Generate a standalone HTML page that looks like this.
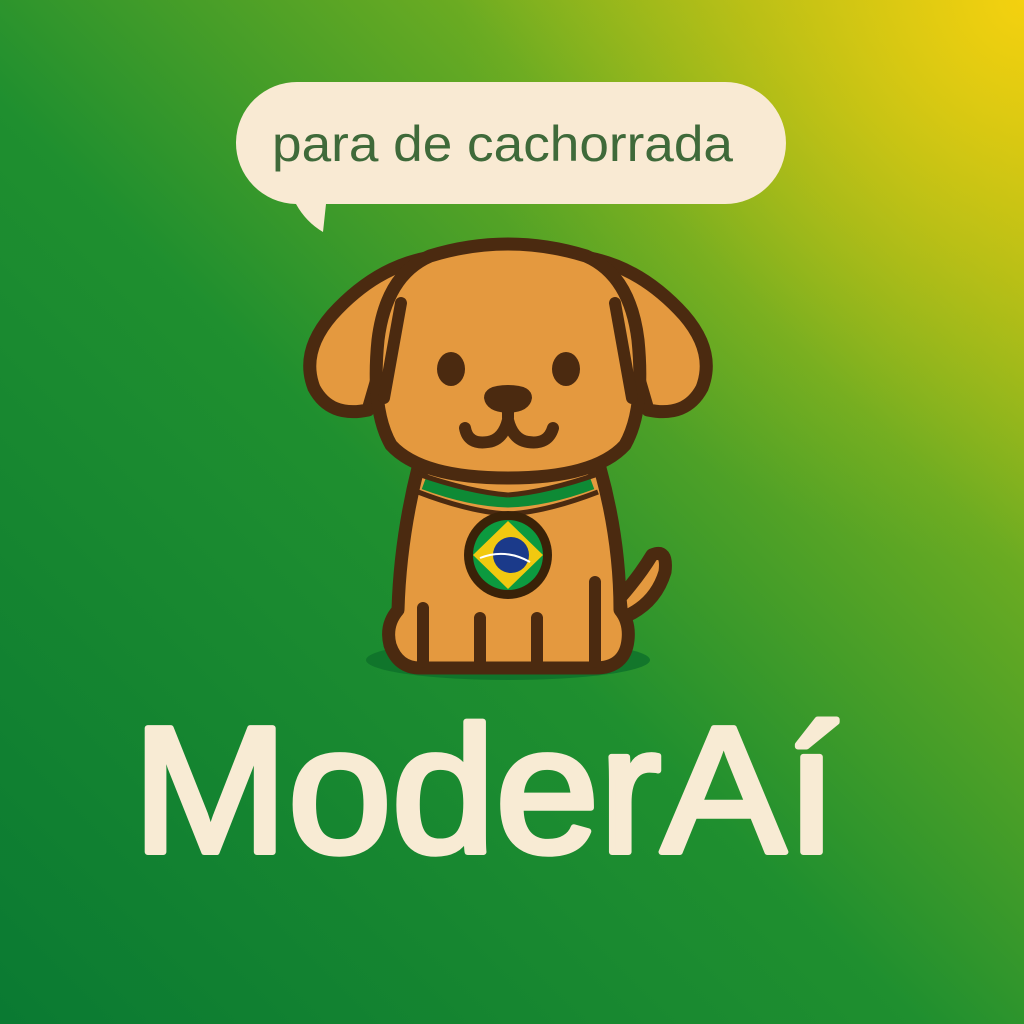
<!DOCTYPE html>
<html><head><meta charset="utf-8"><style>
html,body{margin:0;padding:0;width:1024px;height:1024px;overflow:hidden}
</style></head><body>
<svg width="1024" height="1024" viewBox="0 0 1024 1024" xmlns="http://www.w3.org/2000/svg">
<defs>
<linearGradient id="bg" x1="0" y1="1" x2="1" y2="0">
<stop offset="0" stop-color="#0a7a32"/>
<stop offset="0.45" stop-color="#1f8f2f"/>
<stop offset="0.72" stop-color="#6aab22"/>
<stop offset="1" stop-color="#f5d20e"/>
</linearGradient>
<radialGradient id="yl" cx="1" cy="0" r="0.55">
<stop offset="0" stop-color="#f4d10f" stop-opacity="1"/>
<stop offset="0.5" stop-color="#c2c015" stop-opacity="0.5"/>
<stop offset="1" stop-color="#8ab520" stop-opacity="0"/>
</radialGradient>
<clipPath id="fc"><circle cx="508" cy="555" r="35"/></clipPath>
</defs>
<rect width="1024" height="1024" fill="url(#bg)"/>
<rect width="1024" height="1024" fill="url(#yl)"/>
<path d="M298,82 H725 A61,61 0 0 1 725,204 H326 L323,232 Q306,222 296,204 A61,61 0 0 1 298,82 Z" fill="#f9ead3"/>
<text x="272" y="161" textLength="461" lengthAdjust="spacingAndGlyphs" font-family="Liberation Sans, sans-serif" font-size="50" fill="#3f6a3a">para de cachorrada</text>
<ellipse cx="508" cy="660" rx="142" ry="20" fill="#0e6f2a" opacity="0.8"/>
<g stroke="#4b2a10" stroke-width="13" stroke-linecap="round" stroke-linejoin="round" fill="#e4993f">
<path d="M620,598 Q640,575 652,555 Q668,548 665,572 Q655,605 622,618 Z"/>
<path d="M418,468 Q400,540 398,610 Q385,625 390,645 Q398,668 420,668 L595,668 Q625,668 628,640 Q630,622 620,610 Q620,540 600,468 Z"/>
<path d="M440,256 Q380,262 332,315 Q300,352 314,388 Q330,418 368,410 L400,300 Z"/>
<path d="M576,256 Q636,262 684,315 Q716,352 702,388 Q686,418 648,410 L616,300 Z"/>
<path d="M430,256 Q508,232 586,256 Q630,275 638,340 Q645,410 625,445 Q595,478 508,478 Q421,478 391,445 Q371,410 378,340 Q386,275 430,256 Z"/>
</g>
<g stroke="#4b2a10" stroke-width="12" stroke-linecap="round" fill="none">
<path d="M401,303 L384,398"/>
<path d="M615,303 L632,398"/>
<path d="M423,608 L423,662"/>
<path d="M480,618 L480,668"/>
<path d="M537,618 L537,668"/>
<path d="M595,582 L595,662"/>
<path d="M508,403 L508,418 M465,428 Q468,445 488,442 Q503,440 508,420 Q513,440 528,442 Q548,445 553,428"/>
</g>
<path d="M424,483 Q470,500 508,501 Q546,500 592,483" stroke="#0e8a35" stroke-width="13" fill="none"/>
<path d="M418,474 Q470,492 508,495 M598,474 Q546,492 508,495 M418,492 Q470,512 508,514 M598,492 Q546,512 508,514" stroke="#4b2a10" stroke-width="5" fill="none"/>
<ellipse cx="451" cy="369" rx="14" ry="17" fill="#4b2a10"/>
<ellipse cx="566" cy="369" rx="14" ry="17" fill="#4b2a10"/>
<path d="M484,398 Q484,385 508,385 Q532,385 532,398 Q530,412 508,413 Q486,412 484,398 Z" fill="#4b2a10"/>
<circle cx="508" cy="555" r="44" fill="#3a2208"/>
<g clip-path="url(#fc)">
<rect x="470" y="517" width="80" height="80" fill="#0c9a3f"/>
<polygon points="508,521 543,555 508,589 473,555" fill="#f1c910"/>
<circle cx="511" cy="555" r="18" fill="#1b3a8a"/>
<path d="M480,558 Q505,548 530,562" stroke="#fff" stroke-width="2" fill="none"/>
</g>
<text x="485" y="852" text-anchor="middle" font-family="Liberation Sans, sans-serif" font-size="180" fill="#f8ebd4" stroke="#f8ebd4" stroke-width="6" stroke-linejoin="round" textLength="705" lengthAdjust="spacingAndGlyphs">ModerAí</text>
</svg>
</body></html>
